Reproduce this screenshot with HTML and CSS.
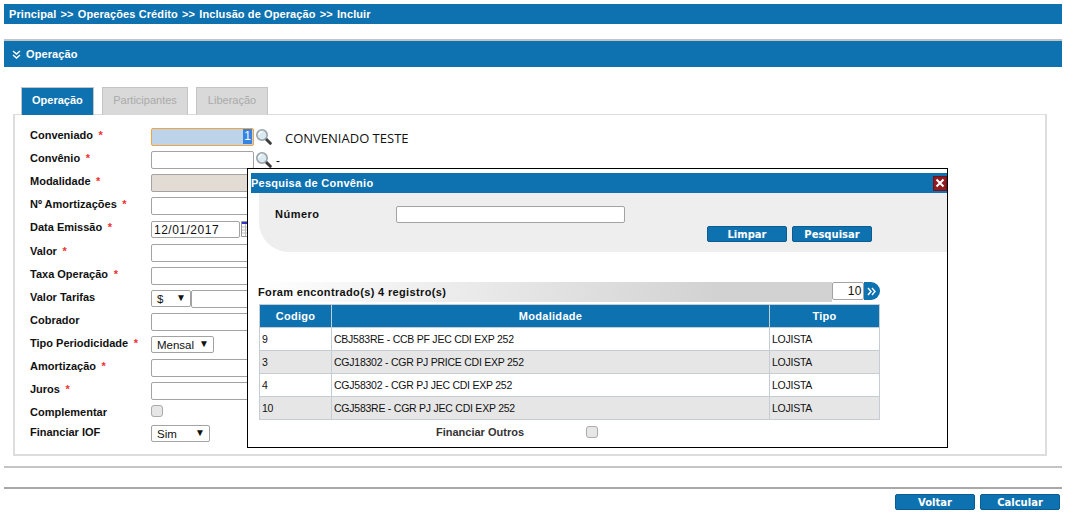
FILE: index.html
```html
<!DOCTYPE html>
<html lang="en">
<head>
    <meta charset="UTF-8">
    <title>Inclusão de Operação</title>
    <link rel="stylesheet" href="styles.css">
</head>
<body>
    <div class="breadcrumb">Principal <span>&gt;&gt;</span> Operações Crédito <span>&gt;&gt;</span> Inclusão de Operação <span>&gt;&gt;</span> Incluir</div>

    <div class="panel">
        <div class="panel-title">
            <svg class="chevrons" width="9" height="9" viewBox="0 0 9 9"><path d="M1 1l3.500 3 3.500-3M1 5l3.500 3 3.500-3" fill="none" stroke="#fff" stroke-width="1.500"/></svg>
            Operação
        </div>
        <div class="tabs">
            <div class="tab active">Operação</div>
            <div class="tab">Participantes</div>
            <div class="tab">Liberação</div>
        </div>
        <div class="form-box">
            <div class="row">
                <label>Conveniado <i>*</i></label>
                <div class="field focused"><span>1</span></div>
                <svg class="lens" width="17" height="17" viewBox="0 0 17 17"><use href="#lens"/></svg>
                <span class="owner">CONVENIADO TESTE</span>
            </div>
            <div class="row">
                <label>Convênio <i>*</i></label>
                <input class="field" type="text">
                <svg class="lens" width="17" height="17" viewBox="0 0 17 17"><use href="#lens"/></svg>
                <span class="dash">-</span>
            </div>
            <div class="row">
                <label>Modalidade <i>*</i></label>
                <input class="field locked" type="text">
            </div>
            <div class="row">
                <label>Nº Amortizações <i>*</i></label>
                <input class="field" type="text">
            </div>
            <div class="row row-date">
                <label>Data Emissão <i>*</i></label>
                <input class="field date" type="text" value="12/01/2017">
                <svg class="calendar" width="14" height="16" viewBox="0 0 14 16"><path d="M.5 .5h13v15H.5z" fill="#fff" stroke="#999"/><path d="M1 1h12v2H1z" fill="#33c"/><path d="M1 6h12M1 9h12M1 12h12M4.500 3v12M8.500 3v12" stroke="#bbb"/></svg>
            </div>
            <div class="row">
                <label>Valor <i>*</i></label>
                <input class="field" type="text">
            </div>
            <div class="row">
                <label>Taxa Operação <i>*</i></label>
                <input class="field" type="text">
            </div>
            <div class="row">
                <label>Valor Tarifas</label>
                <div class="select currency">$<b>▼</b></div>
                <input class="field" type="text">
            </div>
            <div class="row">
                <label>Cobrador</label>
                <input class="field" type="text">
            </div>
            <div class="row">
                <label>Tipo Periodicidade <i>*</i></label>
                <div class="select period">Mensal<b>▼</b></div>
            </div>
            <div class="row">
                <label>Amortização <i>*</i></label>
                <input class="field" type="text">
            </div>
            <div class="row">
                <label>Juros <i>*</i></label>
                <input class="field" type="text">
            </div>
            <div class="row row-short">
                <label>Complementar</label>
                <span class="check"></span>
            </div>
            <div class="row">
                <label>Financiar IOF</label>
                <div class="select iof">Sim<b>▼</b></div>
            </div>
        </div>
    </div>

    <div class="footer">
        <button class="btn">Voltar</button>
        <button class="btn">Calcular</button>
    </div>

    <!-- lookup popup, sits over the form -->
    <div class="modal">
        <div class="modal-title">
            Pesquisa de Convênio
            <span class="close"><svg width="10" height="10" viewBox="0 0 10 10"><path d="M1.500 1.500l7 7M8.500 1.500l-7 7" stroke="#fff" stroke-width="2"/></svg></span>
        </div>
        <div class="search">
            <div class="search-row">
                <label>Número</label>
                <input class="field numero" type="text">
            </div>
            <div class="search-actions">
                <button class="btn">Limpar</button>
                <button class="btn">Pesquisar</button>
            </div>
        </div>
        <div class="results">
            <div class="results-bar">
                <div class="results-count">Foram encontrado(s) 4 registro(s)</div>
                <div class="page-size">10</div>
                <span class="page-go"><svg width="10" height="9" viewBox="0 0 10 9"><path d="M1 1l3 3.500-3 3.500M5 1l3 3.500-3 3.500" fill="none" stroke="#fff" stroke-width="1.400"/></svg></span>
            </div>
            <table>
                <thead>
                    <tr><th class="col-code">Codigo</th><th class="col-mod">Modalidade</th><th>Tipo</th></tr>
                </thead>
                <tbody>
                    <tr><td>9</td><td>CBJ583RE - CCB PF JEC CDI EXP 252</td><td>LOJISTA</td></tr>
                    <tr><td>3</td><td>CGJ18302 - CGR PJ PRICE CDI EXP 252</td><td>LOJISTA</td></tr>
                    <tr><td>4</td><td>CGJ58302 - CGR PJ JEC CDI EXP 252</td><td>LOJISTA</td></tr>
                    <tr><td>10</td><td>CGJ583RE - CGR PJ JEC CDI EXP 252</td><td>LOJISTA</td></tr>
                </tbody>
            </table>
            <div class="others">
                <label>Financiar Outros</label>
                <span class="check"></span>
            </div>
        </div>
    </div>

    <svg width="0" height="0" class="defs">
        <symbol id="lens" viewBox="0 0 17 17">
            <path d="M11 11l4.300 4.300" stroke="#3c3c3c" stroke-width="3" stroke-linecap="round"/>
            <circle cx="7" cy="7" r="5.200" fill="#dbe9f1" stroke="#98a4ab" stroke-width="1.600"/>
            <path d="M3.800 7a3.200 3.200 0 0 1 3.200-3.200" fill="none" stroke="#fff" stroke-width="1.200"/>
        </symbol>
    </svg>
</body>
</html>
```

FILE: styles.css
```css
:root {
    --blue: #0e71b0;
    --line: #c4c4c4;
    --field-border: #a3a3a3;
}

* {
    box-sizing: border-box;
}

html, body {
    height: 512px;
    overflow: hidden;
}

body {
    margin: 0;
    padding: 4px 4px 0;
    position: relative;
    font-family: "Liberation Sans", Arial, sans-serif;
    font-size: 11px;
    color: #111;
    background: #fff;
}

.breadcrumb {
    height: 20px;
    padding-left: 5px;
    line-height: 20px;
    background: var(--blue);
    color: #fff;
    font-weight: bold;
    letter-spacing: 0.1px;
}

.breadcrumb span {
    margin: 0 1px;
}

.panel {
    height: 429px;
    margin-top: 15px;
    border-top: 2px solid var(--line);
    border-bottom: 2px solid var(--line);
}

.panel-title {
    display: flex;
    align-items: center;
    gap: 5px;
    height: 26px;
    padding-left: 8px;
    background: var(--blue);
    color: #fff;
    font-weight: bold;
    letter-spacing: 0.1px;
}

.tabs {
    display: flex;
    gap: 8px;
    margin: 20px 0 0 17px;
}

.tab {
    height: 28px;
    padding: 0 10.500px;
    line-height: 24px;
    background: #d9d9d9;
    border: 1px solid #c4c4c4;
    border-bottom: 0;
    color: #aaa;
}

.tab.active {
    padding: 0 10px;
    background: var(--blue);
    color: #fff;
    font-weight: bold;
}

.form-box {
    height: 342px;
    margin: -1px 15px 0 9px;
    padding: 13px 0 0 15px;
    border: 1px solid #ddd;
    border-width: 1px 2px 2px 2px;
}

.row {
    display: flex;
    align-items: flex-start;
    height: 23px;
}

.row-date {
    height: 24px;
}

.row-short {
    height: 20px;
}

.row label {
    width: 121px;
    line-height: 14px;
    font-weight: bold;
    white-space: nowrap;
}

.row label i {
    margin-left: 2.500px;
    color: #f03030;
    font-style: normal;
}

.field {
    width: 103px;
    height: 18px;
    padding: 0 2px;
    margin: 0;
    background: #fff;
    border: 1px solid var(--field-border);
    border-radius: 2px;
    font-family: "Liberation Sans", Arial, sans-serif;
    font-size: 12px;
    letter-spacing: 0.5px;
    color: #111;
}

.field.focused {
    background: #bdd3e9;
    border-color: #f5a33a;
    text-align: right;
    line-height: 15px;
    padding-right: 1px;
    letter-spacing: 0;
}

.field.focused span {
    display: inline-block;
    padding: 0 1px;
    background: #3584e4;
    color: #fff;
}

.field.locked {
    background: #e3dcd4;
}

.field.date {
    width: 89px;
    height: 17px;
    margin-top: 1px;
}

.lens {
    flex: none;
    margin-left: 1px;
}

.owner {
    margin: 1px 0 0 13px;
    font-family: "Open Sans", sans-serif;
    font-size: 13px;
    color: #111;
}

.dash {
    margin: 3px 0 0 4px;
    font-size: 12px;
}

.calendar {
    flex: none;
    margin: 1px 0 0 1px;
}

.select {
    display: flex;
    justify-content: space-between;
    height: 17px;
    padding: 0 4px 0 5px;
    border: 1px solid var(--field-border);
    border-radius: 2px;
    font-size: 11.500px;
    line-height: 17px;
}

.select b {
    font-size: 10px;
    font-weight: normal;
    line-height: 13px;
}

.select.currency {
    width: 40px;
}

.select.period {
    width: 63px;
}

.select.iof {
    width: 59px;
}

.check {
    display: block;
    width: 12px;
    height: 12px;
    background: #e6e6e6;
    border: 1px solid #aaa;
    border-radius: 3px;
}

.footer {
    display: flex;
    justify-content: flex-end;
    gap: 5px;
    height: 24px;
    margin-top: 19px;
    padding: 5px 2px 0 0;
    border-top: 2px solid #a8a8a8;
}

.btn {
    width: 80px;
    height: 16px;
    padding: 0;
    background: var(--blue);
    border: 1px solid #0b5c90;
    border-radius: 2px;
    color: #fff;
    font-family: "DejaVu Sans", sans-serif;
    font-size: 10px;
    font-weight: bold;
    line-height: 13px;
}

.defs {
    position: absolute;
}

.modal {
    position: absolute;
    left: 247px;
    top: 168px;
    width: 701px;
    height: 280px;
    padding: 4px 0 0 3px;
    background: #fff;
    border: 1px solid #000;
}

.modal-title {
    display: flex;
    align-items: center;
    justify-content: space-between;
    height: 20px;
    background: var(--blue);
    color: #fff;
    font-weight: bold;
    letter-spacing: 0.25px;
}

.close {
    display: flex;
    align-items: center;
    justify-content: center;
    width: 14px;
    height: 15px;
    background: #8e1c22;
    border: 1px solid #6d1418;
}

.search {
    height: 59px;
    margin-left: 8px;
    padding: 13px 0 0 16px;
    background: #eee;
    border-bottom-left-radius: 30px;
}

.search-row {
    display: flex;
    align-items: flex-start;
}

.search-row label {
    width: 121px;
    line-height: 17px;
    font-weight: bold;
    letter-spacing: 0.5px;
}

.field.numero {
    width: 229px;
    height: 17px;
}

.search-actions {
    display: flex;
    gap: 5px;
    margin: 3px 0 0 432px;
}

.results {
    margin: 30px 0 0 7px;
}

.results-bar {
    display: flex;
    width: 622px;
}

.results-count {
    width: 574px;
    height: 20px;
    line-height: 20px;
    background: linear-gradient(to right, #fff, #d2d2d2 80%);
    font-weight: bold;
    letter-spacing: 0.35px;
}

.page-size {
    width: 32px;
    height: 18px;
    padding-right: 1px;
    border: 1px solid var(--field-border);
    border-radius: 2px;
    font-size: 12px;
    line-height: 16px;
    text-align: right;
    letter-spacing: 0.5px;
}

.page-go {
    display: flex;
    align-items: center;
    justify-content: center;
    width: 16px;
    height: 18px;
    background: var(--blue);
    border-radius: 0 9px 9px 0;
}

table {
    width: 621px;
    margin: 2px 0 0 1px;
    border-collapse: collapse;
    table-layout: fixed;
}

th, td {
    height: 23px;
    padding: 0 2px;
    border: 1px solid #c4ccd4;
}

th {
    background: var(--blue);
    color: #fff;
    font-size: 11px;
    letter-spacing: 0.3px;
}

td {
    font-size: 10.500px;
    letter-spacing: -0.24px;
    color: #111;
}

tbody tr:nth-child(even) td {
    background: #e6e6e6;
}

.col-code {
    width: 72px;
}

.col-mod {
    width: 438px;
}

.others {
    display: flex;
    align-items: center;
    height: 24px;
    padding-left: 178px;
}

.others label {
    width: 150px;
    font-weight: bold;
    color: #333;
}
```
